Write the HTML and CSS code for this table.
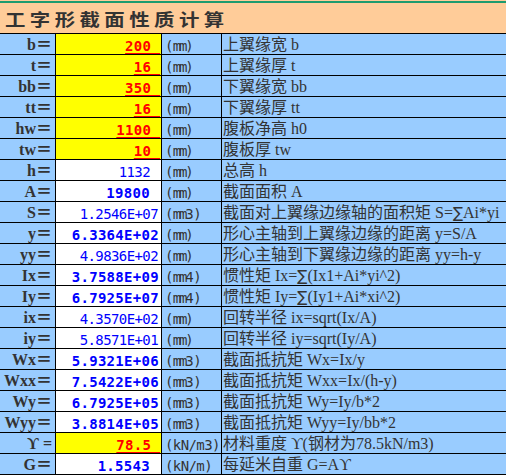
FILE: index.html
```html
<!DOCTYPE html>
<html lang="zh-CN">
<head>
<meta charset="utf-8">
<title>工字形截面性质计算</title>
<link rel="stylesheet" href="styles.css">
</head>
<body>
<div class="head">
  <div class="rule"></div>
  <div class="title"><span class="tt">工字形截面性质计算</span></div>
</div>
<div class="sheet">
  <div class="lab">b＝</div><div class="val in"><span class="u">200 </span></div><div class="unit">(<span class="mm">mm</span>)</div><div class="desc">上翼缘宽 b</div>
  <div class="lab">t＝</div><div class="val in"><span class="u">16 </span></div><div class="unit">(<span class="mm">mm</span>)</div><div class="desc">上翼缘厚 t</div>
  <div class="lab">bb＝</div><div class="val in"><span class="u">350 </span></div><div class="unit">(<span class="mm">mm</span>)</div><div class="desc">下翼缘宽 bb</div>
  <div class="lab">tt＝</div><div class="val in"><span class="u">16 </span></div><div class="unit">(<span class="mm">mm</span>)</div><div class="desc">下翼缘厚 tt</div>
  <div class="lab">hw＝</div><div class="val in"><span class="u">1100 </span></div><div class="unit">(<span class="mm">mm</span>)</div><div class="desc">腹板净高 h0</div>
  <div class="lab">tw＝</div><div class="val in"><span class="u">10 </span></div><div class="unit">(<span class="mm">mm</span>)</div><div class="desc">腹板厚 tw</div>
  <div class="lab">h＝</div><div class="val int">1132</div><div class="unit">(<span class="mm">mm</span>)</div><div class="desc">总高 h</div>
  <div class="lab">A＝</div><div class="val int b">19800</div><div class="unit">(<span class="mm">mm</span>)</div><div class="desc">截面面积 A</div>
  <div class="lab">S＝</div><div class="val">1.2546E+07</div><div class="unit">(<span class="mm">mm</span>3)</div><div class="desc">截面对上翼缘边缘轴的面积矩 S=<span class="sym">∑</span>Ai*yi</div>
  <div class="lab">y＝</div><div class="val b">6.3364E+02</div><div class="unit">(<span class="mm">mm</span>)</div><div class="desc">形心主轴到上翼缘边缘的距离 y=S/A</div>
  <div class="lab">yy＝</div><div class="val">4.9836E+02</div><div class="unit">(<span class="mm">mm</span>)</div><div class="desc">形心主轴到下翼缘边缘的距离 yy=h-y</div>
  <div class="lab">Ix＝</div><div class="val b">3.7588E+09</div><div class="unit">(<span class="mm">mm</span>4)</div><div class="desc">惯性矩 Ix=<span class="sym">∑</span>(Ix1+Ai*yi^2)</div>
  <div class="lab">Iy＝</div><div class="val b">6.7925E+07</div><div class="unit">(<span class="mm">mm</span>4)</div><div class="desc">惯性矩 Iy=<span class="sym">∑</span>(Iy1+Ai*xi^2)</div>
  <div class="lab">ix＝</div><div class="val">4.3570E+02</div><div class="unit">(<span class="mm">mm</span>)</div><div class="desc">回转半径 ix=sqrt(Ix/A)</div>
  <div class="lab">iy＝</div><div class="val">5.8571E+01</div><div class="unit">(<span class="mm">mm</span>)</div><div class="desc">回转半径 iy=sqrt(Iy/A)</div>
  <div class="lab">Wx＝</div><div class="val b">5.9321E+06</div><div class="unit">(<span class="mm">mm</span>3)</div><div class="desc">截面抵抗矩 Wx=Ix/y</div>
  <div class="lab">Wxx＝</div><div class="val b">7.5422E+06</div><div class="unit">(<span class="mm">mm</span>3)</div><div class="desc">截面抵抗矩 Wxx=Ix/(h-y)</div>
  <div class="lab">Wy＝</div><div class="val b">6.7925E+05</div><div class="unit">(<span class="mm">mm</span>3)</div><div class="desc">截面抵抗矩 Wy=Iy/b*2</div>
  <div class="lab">Wyy＝</div><div class="val b">3.8814E+05</div><div class="unit">(<span class="mm">mm</span>3)</div><div class="desc">截面抵抗矩 Wyy=Iy/bb*2</div>
  <div class="lab">ϒ =</div><div class="val in"><span class="u">78.5 </span></div><div class="unit">(kN/m3)</div><div class="desc">材料重度 ϒ(钢材为78.5kN/m3)</div>
  <div class="lab">G＝</div><div class="val int b">1.5543</div><div class="unit">(kN/m)</div><div class="desc">每延米自重 G=Aϒ</div>
</div>
</body>
</html>
```

FILE: styles.css
```css
html, body {
  margin: 0;
  padding: 0;
  background: #ffffff;
}

body {
  width: 506px;
  font-family: "Liberation Serif", "Noto Sans CJK SC", serif;
}

.head {
  background: #FFCC99;
  padding-top: 1px;
}

.rule {
  height: 2px;
  background: #1E9B6E;
}

.title {
  height: 30px;
  box-sizing: border-box;
  padding: 2px 0 0 5px;
  line-height: 28px;
  font-family: "Noto Sans CJK SC", sans-serif;
  font-weight: 700;
  font-size: 17px;
  color: #333333;
  white-space: nowrap;
}

.tt {
  display: inline-block;
  letter-spacing: 3.7px;
  transform: scaleX(1.2);
  transform-origin: left center;
}

.sheet {
  display: grid;
  grid-template-columns: 55px 105px 59px 1fr;
  grid-auto-rows: 20px;
  gap: 1px;
  background: #000000;
  padding: 1px 0;
}

.sheet > div {
  box-sizing: border-box;
  height: 20px;
  overflow: hidden;
  white-space: nowrap;
  line-height: 16px;
}

.lab {
  background: #99CCFF;
  text-align: right;
  padding: 3px 3px 0 0;
  font-family: "Liberation Serif", "DejaVu Serif", "Noto Sans CJK SC", serif;
  font-weight: 700;
  font-size: 16px;
  color: #333333;
}

.val {
  background: #ffffff;
  text-align: right;
  padding: 4px 3px 0 0;
  font-family: "DejaVu Sans Mono", "Liberation Mono", monospace;
  font-size: 14px;
  letter-spacing: -0.6px;
  color: #0000FF;
}

.val.b {
  font-weight: 700;
  letter-spacing: 0.3px;
  padding-right: 2px;
}

.val.int {
  padding-right: 11px;
}

.val.in {
  background: #FFFF00;
  color: #FF0000;
  font-weight: 700;
  letter-spacing: 0.3px;
  padding-right: 1px;
}

.u {
  white-space: pre;
  text-decoration: underline;
  text-decoration-skip-ink: none;
  text-underline-offset: 2px;
}

.unit {
  background: #99CCFF;
  padding: 4px 0 0 3px;
  font-family: "DejaVu Sans Mono", monospace;
  font-size: 14px;
  letter-spacing: -0.6px;
  color: #333333;
}

.mm {
  letter-spacing: -2.2px;
}

.desc {
  background: #99CCFF;
  padding: 3px 0 0 1px;
  font-family: "Liberation Serif", "DejaVu Serif", "Noto Sans CJK SC", serif;
  font-size: 16px;
  color: #333333;
}

.sym {
  font-family: "DejaVu Sans", sans-serif;
  font-size: 15px;
}
```
